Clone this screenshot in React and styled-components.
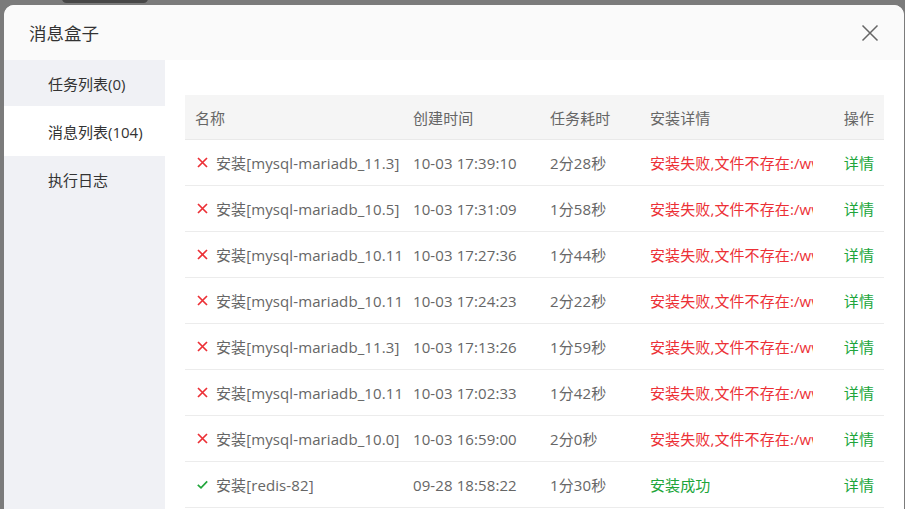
import React from 'react'
import styled, { createGlobalStyle } from 'styled-components'

const GlobalStyle = createGlobalStyle`
  html, body {
    margin: 0;
    padding: 0;
    height: 100%;
    overflow: hidden;
    background: #7b7b7b;
    font-family: "Open Sans", "Noto Sans CJK SC", sans-serif;
  }
`

const Backdrop = styled.div`
  position: relative;
  width: 905px;
  height: 509px;
  overflow: hidden;
  background: #7b7b7b;
  padding: 5px 1px 0 4px;
  box-sizing: border-box;
`

const Behind = styled.div`
  position: absolute;
  top: -6px;
  left: 62px;
  width: 86px;
  height: 9px;
  border-radius: 6px;
  background: #474747;
`

const Modal = styled.div`
  display: flex;
  flex-direction: column;
  height: 560px;
  background: #fff;
  border-radius: 10px;
  overflow: hidden;
`

const Header = styled.div`
  display: flex;
  align-items: center;
  justify-content: space-between;
  height: 55px;
  flex-shrink: 0;
  padding: 0 24px 0 25px;
  background: #fafafa;
`

const Title = styled.div`
  font-size: 17.5px;
  color: #333;
`

const CloseBtn = styled.button`
  display: flex;
  align-items: center;
  justify-content: center;
  width: 20px;
  height: 20px;
  padding: 0;
  border: 0;
  background: none;
  cursor: pointer;
`

const Body = styled.div`
  display: flex;
  flex: 1;
  min-height: 0;
`

const Sidebar = styled.div`
  width: 161px;
  flex-shrink: 0;
  background: #f0f1f5;
`

const Tab = styled.div`
  display: flex;
  align-items: center;
  height: ${p => (p.$active ? 50 : 46)}px;
  padding-left: 44px;
  font-size: 15px;
  color: #333;
  background: ${p => (p.$active ? '#fff' : 'transparent')};
  cursor: pointer;
`

const Content = styled.div`
  flex: 1;
  padding: 35px 20px 0 20px;
`

const Table = styled.table`
  width: 100%;
  table-layout: fixed;
  border-collapse: collapse;
  font-size: 15px;
  letter-spacing: 0.1px;
`

const Th = styled.th`
  height: 44px;
  padding: 0 10px;
  text-align: ${p => p.$align || 'left'};
  font-weight: 400;
  color: #666;
  background: #f5f5f5;
  border-bottom: 1px solid #e9e9e9;
`

const Td = styled.td`
  height: 45px;
  padding: 0 ${p => (p.$tight ? 1 : 10)}px 0 10px;
  text-align: ${p => p.$align || 'left'};
  color: ${p => p.$color || '#666'};
  border-bottom: 1px solid #ececec;
  white-space: nowrap;
  overflow: hidden;
`

const NameCell = styled.div`
  display: flex;
  align-items: center;
  gap: 8px;
  padding-left: 2px;
  white-space: nowrap;
  overflow: hidden;
`

const Clip = styled.div`
  min-width: 0;
  overflow: hidden;
  white-space: nowrap;
`

const Link = styled.a`
  color: #20a53a;
  text-decoration: none;
  cursor: pointer;
`

const RED = '#ec3036'
const GREEN = '#20a53a'

const FailIcon = () => (
  <svg width="11" height="11" viewBox="0 0 11 11" style={{ flexShrink: 0 }}>
    <path d="M1 1 L10 10 M10 1 L1 10" stroke={RED} strokeWidth="1.7" fill="none" />
  </svg>
)

const OkIcon = () => (
  <svg width="11" height="11" viewBox="0 0 11 11" style={{ flexShrink: 0 }}>
    <path d="M0.8 5.8 L4 8.8 L10.2 2.4" stroke={GREEN} strokeWidth="1.7" fill="none" />
  </svg>
)

const rows = [
  { name: '安装[mysql-mariadb_11.3]', time: '10-03 17:39:10', cost: '2分28秒', ok: false },
  { name: '安装[mysql-mariadb_10.5]', time: '10-03 17:31:09', cost: '1分58秒', ok: false },
  { name: '安装[mysql-mariadb_10.11]', time: '10-03 17:27:36', cost: '1分44秒', ok: false },
  { name: '安装[mysql-mariadb_10.11]', time: '10-03 17:24:23', cost: '2分22秒', ok: false },
  { name: '安装[mysql-mariadb_11.3]', time: '10-03 17:13:26', cost: '1分59秒', ok: false },
  { name: '安装[mysql-mariadb_10.11]', time: '10-03 17:02:33', cost: '1分42秒', ok: false },
  { name: '安装[mysql-mariadb_10.0]', time: '10-03 16:59:00', cost: '2分0秒', ok: false },
  { name: '安装[redis-82]', time: '09-28 18:58:22', cost: '1分30秒', ok: true },
  { name: '安装[redis-7.2]', time: '09-28 18:50:11', cost: '1分12秒', ok: true }
]

const tabs = ['任务列表(0)', '消息列表(104)', '执行日志']

export default function App() {
  return (
    <>
      <GlobalStyle />
      <Backdrop>
        <Behind />
        <Modal>
          <Header>
            <Title>消息盒子</Title>
            <CloseBtn aria-label="关闭">
              <svg width="18" height="18" viewBox="0 0 18 18">
                <path d="M1.5 1.5 L16.5 16.5 M16.5 1.5 L1.5 16.5" stroke="#666" strokeWidth="1.5" fill="none" />
              </svg>
            </CloseBtn>
          </Header>
          <Body>
            <Sidebar>
              {tabs.map((t, i) => (
                <Tab key={t} $active={i === 1}>{t}</Tab>
              ))}
            </Sidebar>
            <Content>
              <Table>
                <colgroup>
                  <col style={{ width: 218 }} />
                  <col style={{ width: 137 }} />
                  <col style={{ width: 100 }} />
                  <col style={{ width: 183 }} />
                  <col />
                </colgroup>
                <thead>
                  <tr>
                    <Th>名称</Th>
                    <Th>创建时间</Th>
                    <Th>任务耗时</Th>
                    <Th>安装详情</Th>
                    <Th $align="right">操作</Th>
                  </tr>
                </thead>
                <tbody>
                  {rows.map((r, i) => (
                    <tr key={i}>
                      <Td $tight>
                        <NameCell>
                          {r.ok ? <OkIcon /> : <FailIcon />}
                          <Clip>{r.name}</Clip>
                        </NameCell>
                      </Td>
                      <Td>{r.time}</Td>
                      <Td>{r.cost}</Td>
                      <Td $color={r.ok ? GREEN : RED}>
                        <Clip>{r.ok ? '安装成功' : '安装失败,文件不存在:/www/server/panel/install/mysql.sh'}</Clip>
                      </Td>
                      <Td $align="right"><Link>详情</Link></Td>
                    </tr>
                  ))}
                </tbody>
              </Table>
            </Content>
          </Body>
        </Modal>
      </Backdrop>
    </>
  )
}
